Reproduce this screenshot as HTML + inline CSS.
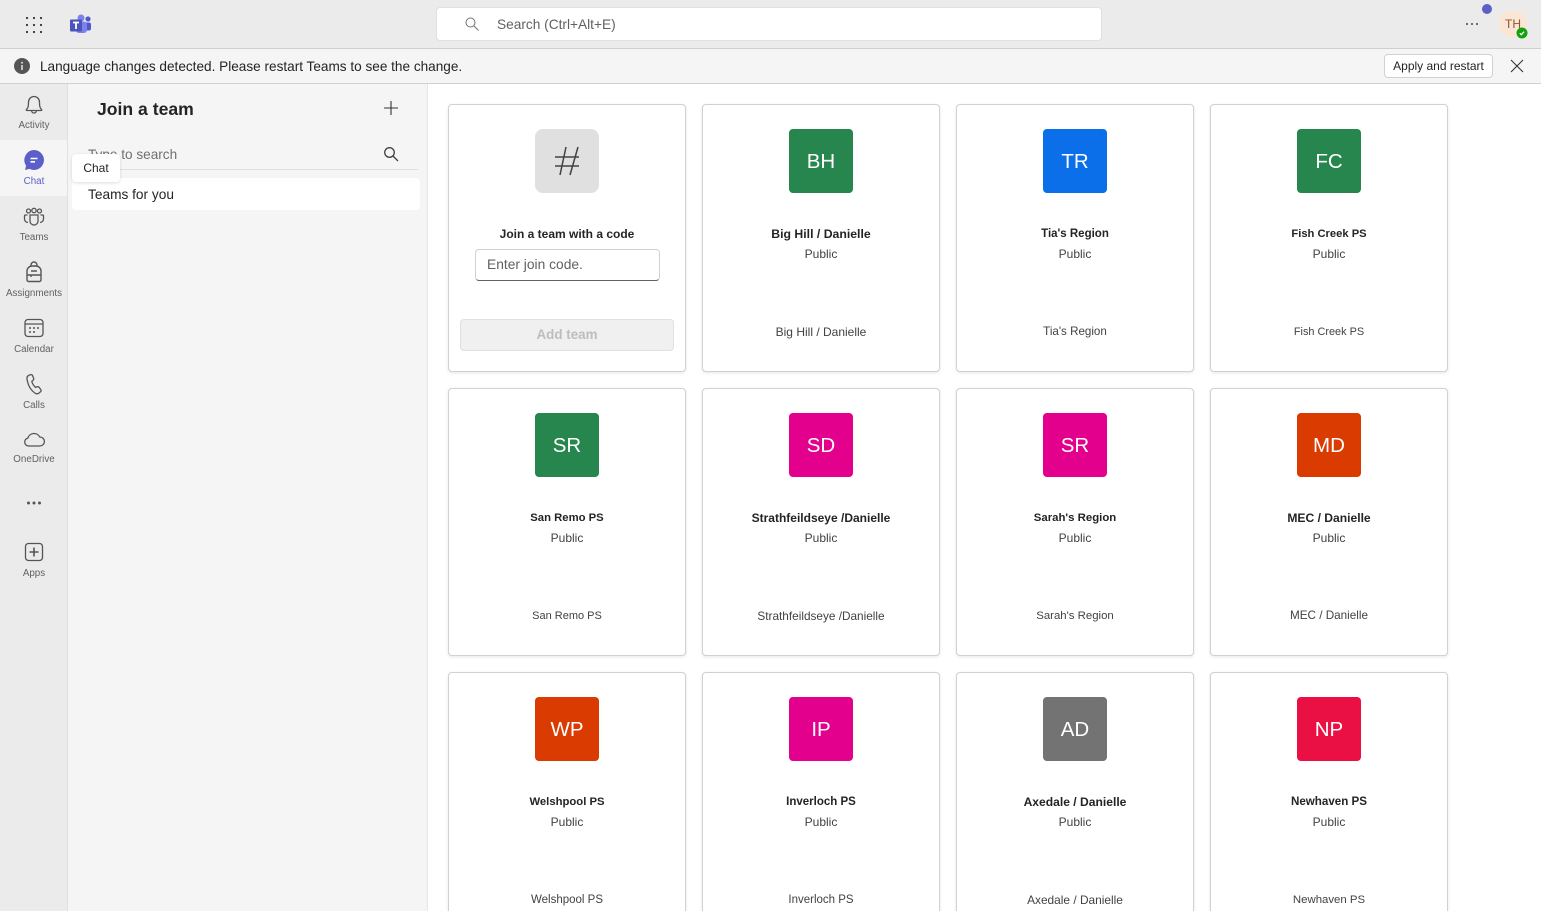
<!DOCTYPE html>
<html lang="en"><head><meta charset="utf-8"><title>Join a team</title>
<style>
html,body{margin:0;padding:0;width:1541px;height:911px;overflow:hidden;background:#fff;font-family:"Liberation Sans",sans-serif;color:#242424}
div,span,svg{position:absolute;box-sizing:border-box}
#r{left:0;top:0;width:1541px;height:911px;overflow:hidden;background:#fff}
.t{white-space:nowrap}
.c{width:238px;height:268px;background:#fff;border:1px solid #d1d1d1;border-radius:4px;box-shadow:0 1px 3px rgba(0,0,0,.1)}
.a{left:86px;top:24px;width:64px;height:64px;border-radius:4px;color:#fff;font-size:20.5px;line-height:66px;text-align:center}
.n{left:0;width:236px;top:121px;text-align:center;font-weight:700;line-height:16px;color:#242424;white-space:nowrap}
.p{left:0;width:236px;top:141px;text-align:center;font-size:12px;line-height:16px;color:#424242}
.b{left:0;width:236px;top:219px;text-align:center;line-height:16px;color:#424242;white-space:nowrap}
.l{left:0;width:68px;text-align:center;font-size:9.8px;line-height:12px;color:#616161;white-space:nowrap}
.i{left:22px;width:24px;height:24px;fill:none;stroke:#555;stroke-width:1.3}
</style></head><body>
<div id="r">

<div style="left:0;top:0;width:1541px;height:49px;background:#ebebeb;border-bottom:1px solid #cfcfcf"></div>
<svg style="left:25px;top:16px" width="18" height="18" fill="#333"><circle cx="2" cy="2" r="1.1"/><circle cx="9" cy="2" r="1.1"/><circle cx="16" cy="2" r="1.1"/><circle cx="2" cy="9" r="1.1"/><circle cx="9" cy="9" r="1.1"/><circle cx="16" cy="9" r="1.1"/><circle cx="2" cy="16" r="1.1"/><circle cx="9" cy="16" r="1.1"/><circle cx="16" cy="16" r="1.1"/></svg>
<svg style="left:69px;top:14px" width="23" height="20"><circle cx="12" cy="4" r="3.5" fill="#7b83eb"/><circle cx="19" cy="5" r="2.6" fill="#5059c9"/><rect x="14" y="8.500" width="8" height="8" rx="2" fill="#5059c9"/><rect x="7" y="7.500" width="11" height="11.500" rx="3" fill="#7b83eb"/><rect x="1" y="5.500" width="12" height="12" rx="1" fill="#4b53bc"/><path d="M4 8.500h6M7 8.500v6.500" stroke="#fff" stroke-width="1.800" fill="none"/></svg>
<div style="left:436px;top:7px;width:666px;height:34px;background:#fff;border:1px solid #e0e0e0;border-radius:4px"></div>
<svg style="left:464px;top:16px" width="16" height="16" fill="none" stroke="#707070" stroke-width="1"><circle cx="6.500" cy="6.500" r="4.500"/><path d="M10 10l4.500 4.500"/></svg>
<div class="t" style="left:497px;top:16px;font-size:13.7px;line-height:17px;color:#616161">Search (Ctrl+Alt+E)</div>
<svg style="left:1465px;top:22px" width="14" height="4" fill="#444"><circle cx="2" cy="2" r="1"/><circle cx="7" cy="2" r="1"/><circle cx="12" cy="2" r="1"/></svg>
<div style="left:1482px;top:4px;width:10px;height:10px;border-radius:50%;background:#5b5fc7"></div>
<div class="t" style="left:1499px;top:10px;width:28px;height:28px;border-radius:50%;background:#fbe6d6;color:#8e562e;font-size:12px;line-height:28px;text-align:center">TH</div>
<svg style="left:1516px;top:27px" width="12" height="12"><circle cx="6" cy="6" r="5.500" fill="#13a10e"/><path d="M3.800 6.200l1.500 1.500 2.800-3" stroke="#fff" stroke-width="1.200" fill="none"/></svg>

<div style="left:0;top:49px;width:1541px;height:35px;background:#f5f5f5;border-bottom:1px solid #d1d1d1"></div>
<svg style="left:14px;top:58px" width="16" height="16"><circle cx="8" cy="8" r="8" fill="#555"/><circle cx="8" cy="4.800" r="1" fill="#ddd"/><rect x="7.200" y="7" width="1.600" height="5" fill="#ddd"/></svg>
<div class="t" style="left:40px;top:58px;font-size:13.6px;line-height:17px;color:#242424">Language changes detected. Please restart Teams to see the change.</div>
<div class="t" style="left:1384px;top:54px;width:109px;height:24px;background:#fff;border:1px solid #d1d1d1;border-radius:4px;font-size:12px;line-height:23px;text-align:center;color:#242424">Apply and restart</div>
<svg style="left:1510px;top:59px" width="14" height="14" fill="none" stroke="#333" stroke-width="1.100"><path d="M1 1l12 12M13 1L1 13"/></svg>

<div style="left:0;top:84px;width:68px;height:827px;background:#ebebeb;border-right:1px solid #e0e0e0"></div>
<div style="left:0;top:140px;width:67px;height:56px;background:#f5f5f5"></div>
<svg class="i" style="top:92px" viewBox="0 0 24 24"><path d="M4.500 17.500c1.500-1.500 2-3 2-7.500a5.500 5.500 0 0 1 11 0c0 4.500.5 6 2 7.500.5.500.3 1-.5 1H5c-.8 0-1-.5-.5-1zM9.500 18.500a2.500 2.500 0 0 0 5 0"/></svg>
<div class="l" style="top:120px">Activity</div>
<svg style="left:22px;top:148px" width="24" height="24"><path d="M12 2a10 10 0 1 1-4.600 18.900L3 22l1.100-4.400A10 10 0 0 1 12 2z" fill="#5b5fc7"/><path d="M8.500 10.500h7M8.500 13.800h4.500" stroke="#fff" stroke-width="1.600"/></svg>
<div class="l" style="top:176px;color:#5b5fc7">Chat</div>
<svg class="i" style="top:204px" viewBox="0 0 24 24"><circle cx="6.500" cy="7" r="2"/><circle cx="12" cy="6.500" r="2.200"/><circle cx="17.500" cy="7" r="2"/><path d="M8 11h8v6a4 4 0 0 1-8 0zM5.500 11H3.500a1 1 0 0 0-1 1v3a3.500 3.500 0 0 0 3.500 3.500M18.500 11h2a1 1 0 0 1 1 1v3a3.500 3.500 0 0 1-3.500 3.500"/></svg>
<div class="l" style="top:232px">Teams</div>
<svg class="i" style="top:260px" viewBox="0 0 24 24"><path d="M9 6V5a3 3 0 0 1 6 0v1M5 20V11a5 5 0 0 1 5-5h4a5 5 0 0 1 5 5v9a1.500 1.500 0 0 1-1.500 1.500h-11A1.500 1.500 0 0 1 5 20zM5 15h14M9 11h6M9 15v2" stroke-width="1.400"/></svg>
<div class="l" style="top:288px">Assignments</div>
<svg class="i" style="top:316px" viewBox="0 0 24 24"><rect x="3" y="3.500" width="18" height="17" rx="3"/><path d="M3 8h18"/><g fill="#555" stroke="none"><circle cx="8" cy="12" r="1"/><circle cx="12" cy="12" r="1"/><circle cx="16" cy="12" r="1"/><circle cx="8" cy="16" r="1"/><circle cx="12" cy="16" r="1"/></g></svg>
<div class="l" style="top:344px">Calendar</div>
<svg class="i" style="top:372px" viewBox="0 0 24 24"><path d="M6.500 3.500l2-.8c1-.3 1.700.1 2.100 1l1 2.500c.3.800.1 1.500-.5 2l-1.300 1.200c.5 2 1.800 4.300 3.700 6l1.700-.6c.8-.3 1.500 0 2 .6l1.500 2.100c.6.800.5 1.700-.2 2.300l-1.400 1.200c-1 .8-2.300 1-3.500.5C9.500 19 6 14 5 7c-.2-1.500.4-2.900 1.500-3.500z"/></svg>
<div class="l" style="top:400px">Calls</div>
<svg class="i" style="top:428px" viewBox="0 0 24 24"><path d="M6.500 18a4 4 0 0 1-.7-7.900A6.500 6.500 0 0 1 17.800 9 4.500 4.500 0 0 1 18 18z"/></svg>
<div class="l" style="top:454px">OneDrive</div>
<svg style="left:26px;top:500px" width="16" height="6" fill="#555"><circle cx="2.500" cy="3" r="1.500"/><circle cx="8" cy="3" r="1.500"/><circle cx="13.500" cy="3" r="1.500"/></svg>
<svg class="i" style="top:540px" viewBox="0 0 24 24"><rect x="3.500" y="3.500" width="17" height="17" rx="3"/><path d="M12 7.500v9M7.500 12h9" stroke-width="1.600"/></svg>
<div class="l" style="top:568px">Apps</div>

<div style="left:68px;top:84px;width:360px;height:827px;background:#f5f5f5;border-right:1px solid #e6e6e6"></div>
<div class="t" style="left:97px;top:98px;font-size:17.600px;font-weight:700;line-height:22px;color:#242424">Join a team</div>
<svg style="left:383px;top:100px" width="16" height="16" stroke="#333" stroke-width="1.100"><path d="M8 1v14M1 8h14"/></svg>
<div class="t" style="left:88px;top:146px;font-size:13.6px;line-height:17px;color:#707070">Type to search</div>
<svg style="left:383px;top:146px" width="16" height="16" fill="none" stroke="#424242" stroke-width="1.300"><circle cx="6.500" cy="6.500" r="4.800"/><path d="M10 10l5 5"/></svg>
<div style="left:76px;top:169px;width:342px;height:1px;background:#e0e0e0"></div>
<div class="t" style="left:72px;top:178px;width:348px;height:32px;background:#fff;border-radius:4px;padding-left:16px;font-size:13.7px;line-height:33px;color:#242424">Teams for you</div>
<div class="t" style="left:72px;top:154px;width:48px;height:28px;background:#fff;border-radius:4px;box-shadow:0 1px 3px rgba(0,0,0,.14);font-size:12px;line-height:28px;text-align:center;color:#242424">Chat</div>

<div class="c" style="left:448px;top:104px">
<div style="left:86px;top:24px;width:64px;height:64px;border-radius:8px;background:#e0e0e0"></div>
<svg style="left:104px;top:41px" width="28" height="30" fill="none" stroke="#424242" stroke-width="1.500"><path d="M13 1L7 29M25 1L17 29M2 11h24M2 20h24"/></svg>
<div class="n" style="font-size:12px">Join a team with a code</div>
<div class="t" style="left:26px;top:144px;width:185px;height:32px;background:#fff;border:1px solid #d1d1d1;border-bottom:1px solid #616161;border-radius:4px;padding-left:11px;font-size:13.8px;line-height:30px;color:#616161">Enter join code.</div>
<div class="t" style="left:11px;top:214px;width:214px;height:32px;background:#f0f0f0;border:1px solid #e0e0e0;border-radius:4px;font-size:13.400px;font-weight:700;line-height:30px;text-align:center;color:#bdbdbd">Add team</div>
</div>

<div class="c" style="left:702px;top:104px"><div class="a" style="background:#26864d">BH</div><div class="n" style="font-size:12.250px">Big Hill / Danielle</div><div class="p">Public</div><div class="b" style="font-size:12px">Big Hill / Danielle</div></div>
<div class="c" style="left:956px;top:104px"><div class="a" style="background:#0a6fe8">TR</div><div class="n" style="font-size:11.500px">Tia's Region</div><div class="p">Public</div><div class="b" style="font-size:11.600px">Tia's Region</div></div>
<div class="c" style="left:1210px;top:104px"><div class="a" style="background:#26864d">FC</div><div class="n" style="font-size:11.200px">Fish Creek PS</div><div class="p">Public</div><div class="b" style="font-size:10.900px">Fish Creek PS</div></div>

<div class="c" style="left:448px;top:388px"><div class="a" style="background:#26864d">SR</div><div class="n" style="font-size:11.300px">San Remo PS</div><div class="p">Public</div><div class="b" style="font-size:11px">San Remo PS</div></div>
<div class="c" style="left:702px;top:388px"><div class="a" style="background:#e3008c">SD</div><div class="n" style="font-size:12px">Strathfeildseye /Danielle</div><div class="p">Public</div><div class="b" style="font-size:11.800px">Strathfeildseye /Danielle</div></div>
<div class="c" style="left:956px;top:388px"><div class="a" style="background:#e3008c">SR</div><div class="n" style="font-size:11.400px">Sarah's Region</div><div class="p">Public</div><div class="b" style="font-size:11.400px">Sarah's Region</div></div>
<div class="c" style="left:1210px;top:388px"><div class="a" style="background:#da3b01">MD</div><div class="n" style="font-size:12.100px">MEC / Danielle</div><div class="p">Public</div><div class="b" style="font-size:11.700px">MEC / Danielle</div></div>

<div class="c" style="left:448px;top:672px"><div class="a" style="background:#da3b01">WP</div><div class="n" style="font-size:11.300px">Welshpool PS</div><div class="p">Public</div><div class="b" style="font-size:11.500px">Welshpool PS</div></div>
<div class="c" style="left:702px;top:672px"><div class="a" style="background:#e3008c">IP</div><div class="n" style="font-size:11.500px">Inverloch PS</div><div class="p">Public</div><div class="b" style="font-size:11.500px">Inverloch PS</div></div>
<div class="c" style="left:956px;top:672px"><div class="a" style="background:#737373">AD</div><div class="n" style="font-size:12.100px">Axedale / Danielle</div><div class="p">Public</div><div class="b" style="font-size:11.900px">Axedale / Danielle</div></div>
<div class="c" style="left:1210px;top:672px"><div class="a" style="background:#ea1043">NP</div><div class="n" style="font-size:11.600px">Newhaven PS</div><div class="p">Public</div><div class="b" style="font-size:11.400px">Newhaven PS</div></div>

</div>
</body></html>
